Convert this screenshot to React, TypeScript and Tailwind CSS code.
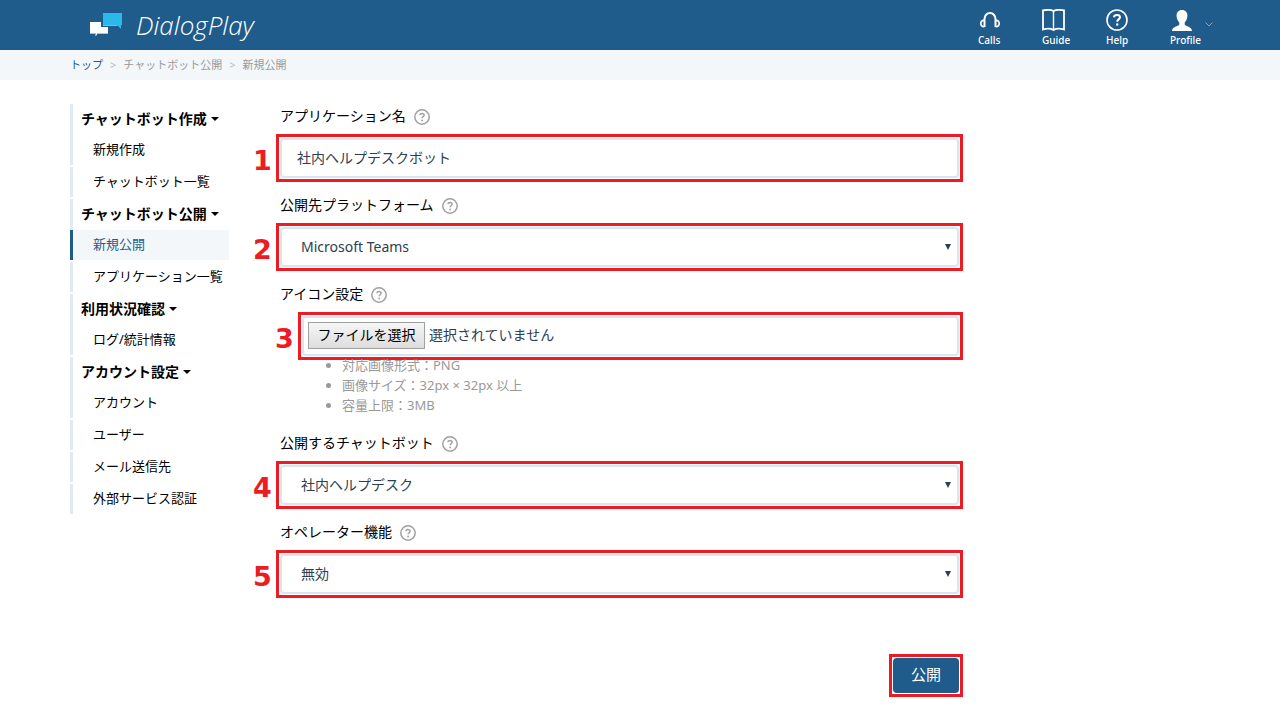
import { useState, type ReactNode } from "react";

const NAV_LINKS = [
  { label: "Calls", icon: <CallsIcon /> },
  { label: "Guide", icon: <GuideIcon /> },
  { label: "Help", icon: <HelpIcon /> },
];

const MENU = [
  { title: "チャットボット作成", items: ["新規作成", "チャットボット一覧"] },
  { title: "チャットボット公開", items: ["新規公開", "アプリケーション一覧"] },
  { title: "利用状況確認", items: ["ログ/統計情報"] },
  {
    title: "アカウント設定",
    items: ["アカウント", "ユーザー", "メール送信先", "外部サービス認証"],
  },
];

const ACTIVE_ITEM = "新規公開";

function Logo() {
  return (
    <svg width="32" height="24" viewBox="0 0 32 24" aria-hidden="true">
      <path d="M0 9h11v5h7v6H8l-2.500 3.500V20H0z" fill="#fff" />
      <path d="M0 20h5.500v1H0zM8 20h10v1H7.500z" fill="#a9c3d6" />
      <path d="M13 0h19v12h-1v4l-4-4H13z" fill="#2bb9ea" />
      <path d="M13 12h14l1 1H13z" fill="#8fb6cf" />
    </svg>
  );
}

function CallsIcon() {
  return (
    <svg
      width="24"
      height="22"
      viewBox="0 0 24 22"
      fill="none"
      stroke="#fff"
      strokeWidth="2"
      aria-hidden="true"
    >
      <path d="M6.500 18V10a5.500 6 0 0 1 11 0v8" />
      <path
        d="M6.500 11.500C4 11 2.800 12.500 2.800 14.500S4 18 6.500 17.500M17.500 11.500C20 11 21.200 12.500 21.200 14.500S20 18 17.500 17.500"
        strokeWidth="1.700"
      />
    </svg>
  );
}

function GuideIcon() {
  return (
    <svg
      width="24"
      height="22"
      viewBox="0 0 24 22"
      fill="none"
      stroke="#fff"
      aria-hidden="true"
    >
      <path
        d="M11.500 2C9.500.6 4 .8 1 1.300V20.500C4 19.600 9 19.500 11.500 21C14 19.500 19 19.600 22 20.500V1.300C19 .8 13.500.6 11.500 2z"
        strokeWidth="1.800"
      />
      <path d="M11.500 2v19" strokeWidth="1.400" />
    </svg>
  );
}

function HelpIcon() {
  return (
    <svg
      width="22"
      height="22"
      viewBox="0 0 22 22"
      fill="none"
      stroke="#fff"
      aria-hidden="true"
    >
      <circle cx="11" cy="11" r="10" strokeWidth="1.600" />
      <path
        d="M8 8.200C8.200 5.200 14 5.200 14 8.300C14 10.500 11.200 10.300 11.200 12.700"
        strokeWidth="2"
      />
      <circle cx="11.200" cy="15.500" r="1.200" fill="#fff" stroke="none" />
    </svg>
  );
}

function ProfileIcon() {
  return (
    <svg width="24" height="22" viewBox="0 0 24 22" fill="#fff" aria-hidden="true">
      <path d="M12 1c3.600 0 5.600 2.400 5.400 6-.1 2.700-1.300 5.200-2.700 6.400v2c1 2 7 1.800 7.300 6.600H2c.3-4.800 6.300-4.600 7.300-6.600v-2C7.900 12.200 6.700 9.700 6.600 7 6.400 3.400 8.400 1 12 1z" />
    </svg>
  );
}

function QuestionMark() {
  return (
    <svg
      width="16"
      height="16"
      viewBox="0 0 16 16"
      fill="none"
      stroke="#a0a0a0"
      aria-hidden="true"
    >
      <circle cx="8" cy="8" r="7.200" strokeWidth="1.500" />
      <path
        d="M6 6.200C6 4 10.100 4 10.100 6.300C10.100 7.800 8.100 7.700 8.100 9.300"
        strokeWidth="1.500"
      />
      <circle cx="8.100" cy="11.500" r=".9" fill="#a0a0a0" stroke="none" />
    </svg>
  );
}

function Header() {
  return (
    <header className="bg-[#1f5c8b] text-white">
      <div className="mx-auto flex h-[50px] max-w-[1146px] items-center justify-between">
        <a href="#" className="flex items-center gap-[14px] pl-[23px]">
          <Logo />
          <span className="font-['Open_Sans'] text-[26px] leading-8 font-light italic">
            DialogPlay
          </span>
        </a>
        <nav className="flex pt-[5px] text-[10px] leading-3 font-medium">
          {NAV_LINKS.map((link) => (
            <a key={link.label} href="#" className="flex w-16 flex-col gap-[3px]">
              {link.icon}
              {link.label}
            </a>
          ))}
          <button type="button" className="flex w-[43px] cursor-pointer flex-col gap-[3px] text-left">
            <span className="flex w-full items-center justify-between">
              <ProfileIcon />
              <svg width="8" height="14" viewBox="0 0 8 14" fill="none" stroke="#8fa3b3" aria-hidden="true">
                <path d="M.5 9.500L4 13l3.500-3.500" />
              </svg>
            </span>
            Profile
          </button>
        </nav>
      </div>
    </header>
  );
}

function Breadcrumb() {
  return (
    <nav className="bg-[#f3f7fa]" aria-label="breadcrumb">
      <ol className="mx-auto flex h-[30px] max-w-[1140px] items-center gap-[7px] text-[11px] text-[#999]">
        <li>
          <a href="#" className="text-[#1f5c8b]">
            トップ
          </a>
        </li>
        <li className="text-[#bbb]">&gt;</li>
        <li>チャットボット公開</li>
        <li className="text-[#bbb]">&gt;</li>
        <li>新規公開</li>
      </ol>
    </nav>
  );
}

function Sidebar() {
  return (
    <nav className="w-[159px] shrink-0">
      {MENU.map((group) => (
        <div key={group.title}>
          <h2 className="flex h-[31px] items-center gap-1 border-l-3 border-[#e1eaf2] pb-[2px] pl-2 text-[14px] font-bold whitespace-nowrap text-black">
            {group.title}
            <span className="border-x-4 border-t-4 border-x-transparent border-t-black" />
          </h2>
          <ul>
            {group.items.map((item) => (
              <li key={item} className="mb-[2px]">
                <a
                  href="#"
                  className={
                    item === ACTIVE_ITEM
                      ? "flex h-[30px] items-center border-l-3 border-[#1f5c8b] bg-[#f3f7fa] pl-5 text-[13px] whitespace-nowrap text-[#1f5c8b]"
                      : "flex h-[30px] items-center border-l-3 border-[#e1eaf2] pl-5 text-[13px] whitespace-nowrap text-black"
                  }
                >
                  {item}
                </a>
              </li>
            ))}
          </ul>
        </div>
      ))}
    </nav>
  );
}

type FieldProps = {
  step: number;
  id: string;
  label: string;
  indent?: boolean;
  children: ReactNode;
};

function Field({ step, id, label, indent, children }: FieldProps) {
  return (
    <div>
      <div className="mb-1 flex h-[26px] items-center gap-2 pl-[27px] text-[14px] text-black">
        <label htmlFor={id} className="pb-[3px]">
          {label}
        </label>
        <QuestionMark />
      </div>
      <div className={indent ? "flex items-center pl-[22px]" : "flex items-center"}>
        <span className="w-[23px] shrink-0 pt-[6px] font-['DejaVu_Sans',sans-serif] text-[27px] leading-8 font-bold text-[#ed1c24]">
          {step}
        </span>
        <div className="min-w-0 flex-1 border-3 border-[#ed1c24] bg-white p-px">
          {children}
        </div>
      </div>
    </div>
  );
}

function Select({ id, options }: { id: string; options: string[] }) {
  return (
    <div className="relative">
      <select
        id={id}
        className="block h-10 w-full appearance-none rounded-sm border-2 border-[#dce4ec] bg-white pr-8 pb-[2px] pl-[19px] text-[14px] text-[#2c3e50]"
      >
        {options.map((option) => (
          <option key={option}>{option}</option>
        ))}
      </select>
      <span className="pointer-events-none absolute top-[17px] right-2 border-x-3 border-t-6 border-x-transparent border-t-[#2c3e50]" />
    </div>
  );
}

export default function App() {
  const [name, setName] = useState("社内ヘルプデスクボット");
  const [fileName, setFileName] = useState("");

  return (
    <div className="bg-white font-['Noto_Sans','Noto_Sans_CJK_JP',sans-serif]">
      <Header />
      <Breadcrumb />
      <div className="mx-auto flex max-w-[1140px] gap-6 pt-6">
        <Sidebar />
        <form
          className="flex max-w-[710px] flex-1 flex-col gap-[11px]"
          onSubmit={(e) => e.preventDefault()}
        >
          <Field step={1} id="name" label="アプリケーション名">
            <input
              id="name"
              type="text"
              value={name}
              onChange={(e) => setName(e.target.value)}
              className="block h-10 w-full rounded-sm border-2 border-[#dce4ec] px-[15px] pb-[2px] text-[14px] text-[#2c3e50]"
            />
          </Field>
          <Field step={2} id="platform" label="公開先プラットフォーム">
            <Select id="platform" options={["Microsoft Teams"]} />
          </Field>
          <div className="mb-1">
            <Field step={3} id="icon" label="アイコン設定" indent>
              <div className="flex h-10 items-center gap-1 rounded-sm border-2 border-[#dce4ec] px-1 pb-[2px] text-[14px] text-[#2c3e50]">
                <input
                  id="icon"
                  type="file"
                  accept="image/png"
                  className="peer sr-only"
                  onChange={(e) => setFileName(e.target.files?.[0]?.name ?? "")}
                />
                <label
                  htmlFor="icon"
                  className="flex h-[27px] w-[117px] items-center justify-center border border-[#a0a0a0] bg-linear-to-b from-[#f6f6f6] to-[#dddddd] pb-[2px] text-black peer-focus-visible:outline-2"
                >
                  ファイルを選択
                </label>
                <span className="pb-[2px]">{fileName || "選択されていません"}</span>
              </div>
            </Field>
            <ul className="-mt-[5px] list-disc pb-px pl-[89px] text-[13px] leading-5 text-[#999]">
              <li>対応画像形式：PNG</li>
              <li>画像サイズ：32px × 32px 以上</li>
              <li>容量上限：3MB</li>
            </ul>
          </div>
          <Field step={4} id="bot" label="公開するチャットボット">
            <Select id="bot" options={["社内ヘルプデスク"]} />
          </Field>
          <Field step={5} id="operator" label="オペレーター機能">
            <Select id="operator" options={["無効", "有効"]} />
          </Field>
          <div className="mt-[45px] self-end border-3 border-[#ed1c24] p-px">
            <button
              type="submit"
              className="block h-[35px] w-[66px] cursor-pointer rounded-sm bg-[#1f5c8b] pb-[2px] text-[15px] text-white"
            >
              公開
            </button>
          </div>
        </form>
      </div>
    </div>
  );
}
